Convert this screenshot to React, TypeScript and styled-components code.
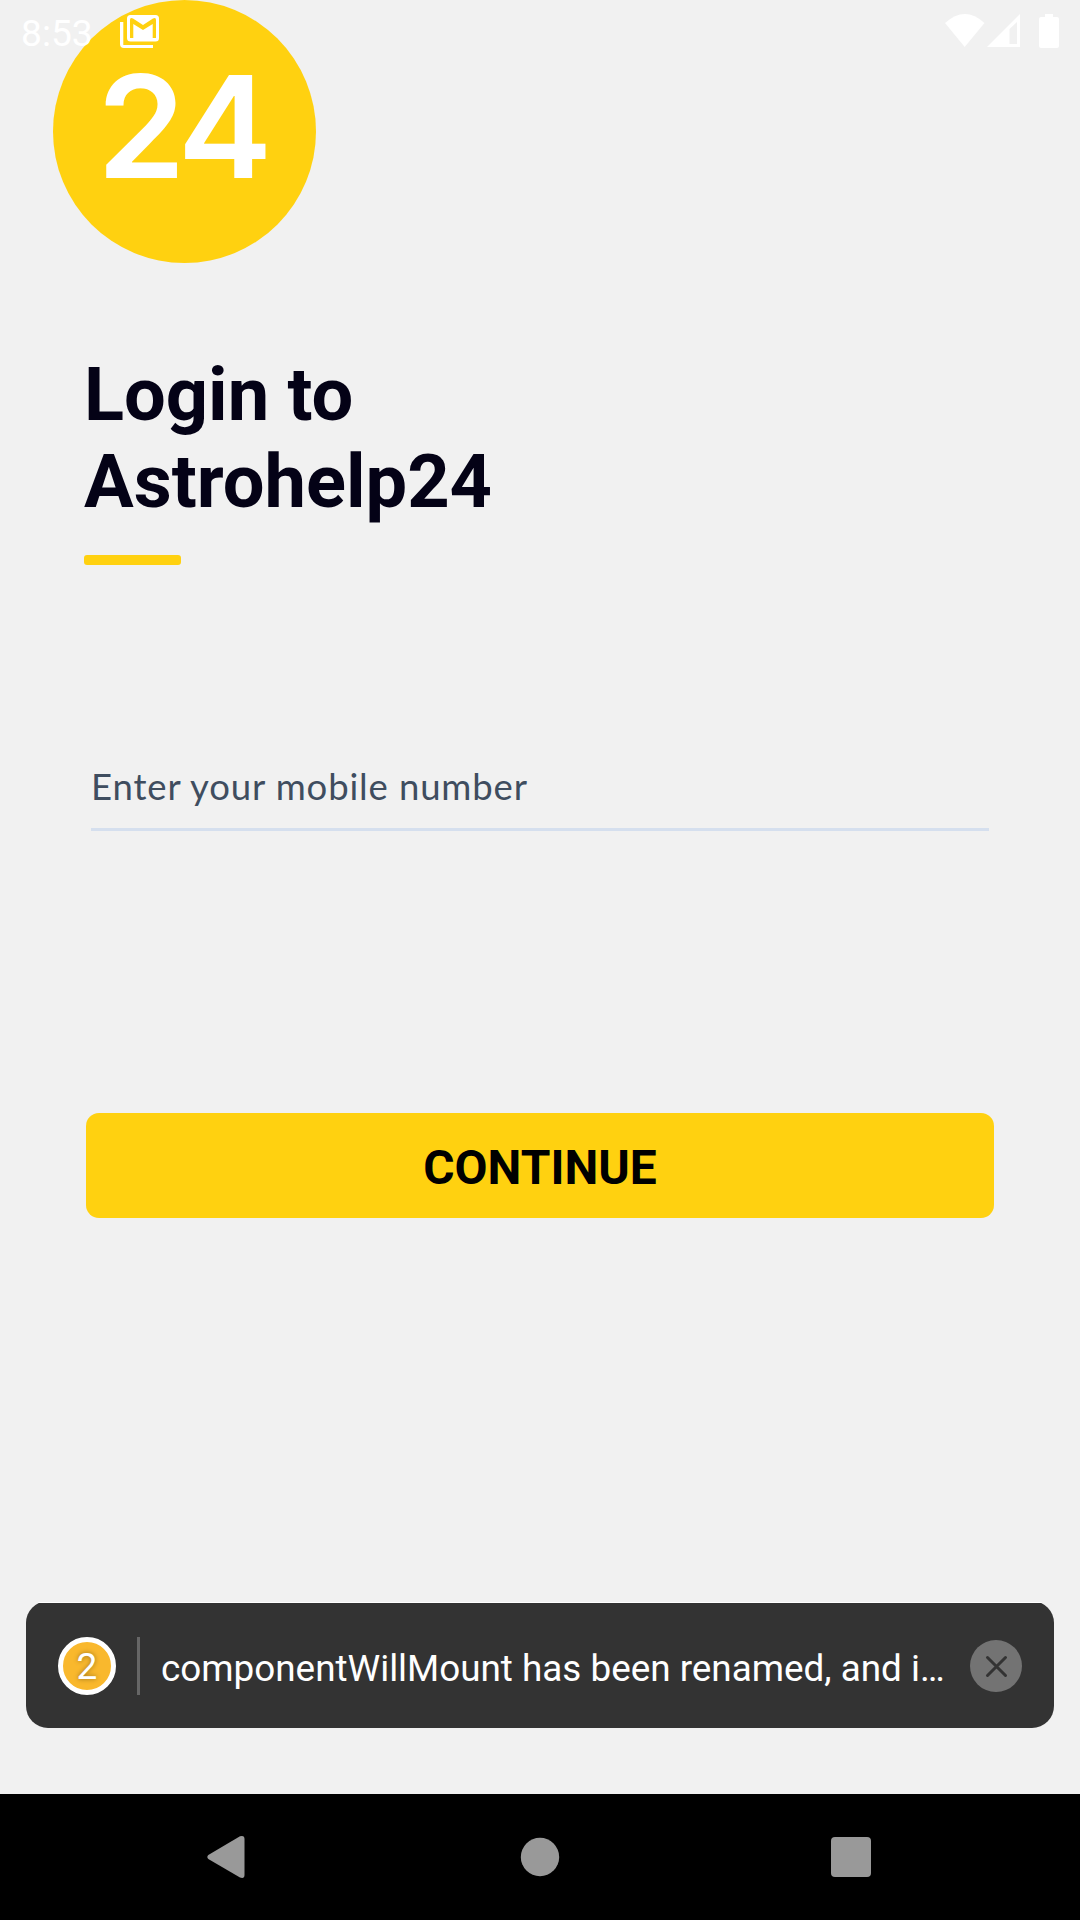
import React from "react";
import styled, { createGlobalStyle } from "styled-components";

const GlobalStyle = createGlobalStyle`
  * { box-sizing: border-box; }
  body { margin: 0; background: #f1f1f1; }
`;

const Screen = styled.div`
  width: 1080px;
  height: 1920px;
  display: flex;
  flex-direction: column;
  background: #f1f1f1;
  font-family: Roboto, sans-serif;
  position: relative;
  overflow: hidden;
`;

const StatusBar = styled.header`
  position: absolute;
  top: 0;
  left: 0;
  right: 0;
  height: 63px;
  padding: 0 21px 0 21px;
  display: flex;
  align-items: flex-start;
  color: #fff;
`;

const Clock = styled.span`
  width: 99px;
  padding-top: 12px;
  font-size: 37.2px;
  line-height: 43px;
`;

const StatusIcon = styled.svg<{ $gap?: number }>`
  display: block;
  margin-left: ${(p) => p.$gap ?? 0}px;
  margin-top: 13px;
  fill: #fff;
`;

const Spacer = styled.div`
  flex: 1;
`;

const Content = styled.main`
  flex: 1;
  display: flex;
  flex-direction: column;
  align-items: flex-start;
`;

const Logo = styled.div`
  width: 263px;
  height: 263px;
  margin-left: 53px;
  padding-right: 5px;
  border-radius: 50%;
  background: #ffd110;
  color: #fff;
  text-align: center;
  font-family: Inter, sans-serif;
  font-size: 142px;
  font-weight: 600;
  letter-spacing: -5.5px;
  line-height: 253px;
`;

const Title = styled.h1`
  margin: 88px 0 0 84px;
  font-size: 74px;
  font-weight: 700;
  line-height: 87px;
  color: #040216;
`;

const Accent = styled.div`
  width: 97px;
  height: 10px;
  margin: 30px 0 0 84px;
  border-radius: 3px;
  background: #ffd110;
`;

const PhoneInput = styled.input`
  width: 898px;
  height: 84px;
  margin: 182px 0 0 91px;
  padding: 0 0 4px;
  border: 0;
  border-bottom: 3px solid #d5dfee;
  border-radius: 0;
  outline: 0;
  background: transparent;
  font-family: Lato, sans-serif;
  font-size: 36.5px;
  letter-spacing: 0.87px;
  color: #3f4d5f;
  &::placeholder {
    color: #3f4d5f;
    opacity: 1;
  }
`;

const ContinueButton = styled.button`
  width: 908px;
  height: 105px;
  margin: 282px 0 0 86px;
  padding: 5px 0 0;
  border: 0;
  border-radius: 13px;
  background: #ffd110;
  color: #000;
  font-family: inherit;
  font-size: 47.9px;
  font-weight: 700;
`;

const ToastEdge = styled.div`
  width: 1004px;
  height: 1px;
  margin-left: 38px;
  background: #fff;
`;

const ToastTray = styled.div`
  height: 125px;
  margin: 0 26px 66px;
  overflow: hidden;
  display: flex;
  align-items: flex-end;
`;

const Toast = styled.aside`
  width: 1028px;
  height: 127px;
  flex: none;
  padding: 2px 32px 0;
  display: flex;
  align-items: center;
  border-radius: 22px;
  background: #333;
  color: #fff;
`;

const Count = styled.span`
  width: 58px;
  height: 58px;
  flex: none;
  border: 5px solid #fff;
  border-radius: 50%;
  background: #f9b82d;
  text-align: center;
  font-size: 37px;
  line-height: 49px;
  text-shadow: 0 0 5px rgba(0, 0, 0, 0.4);
`;

const Divider = styled.span`
  width: 3px;
  height: 58px;
  flex: none;
  margin: 0 21px;
  background: #666;
`;

const Message = styled.span`
  flex: 1;
  padding-top: 6px;
  font-size: 36.85px;
  line-height: 44px;
  white-space: nowrap;
`;

const Dismiss = styled.button`
  width: 52px;
  height: 52px;
  flex: none;
  padding: 0;
  border: 0;
  border-radius: 50%;
  background: #737373;
  display: flex;
  align-items: center;
  justify-content: center;
`;

const NavBar = styled.nav`
  height: 126px;
  flex: none;
  background: #000;
  display: grid;
  grid-template-columns: repeat(3, 311px);
  justify-content: center;
  align-items: center;
  justify-items: center;
`;

const NavIcon = styled.svg`
  fill: #999;
`;

export default function App() {
  return (
    <>
      <GlobalStyle />
      <Screen>
        <Content>
          <Logo>24</Logo>
          <Title>
            Login to
            <br />
            Astrohelp24
          </Title>
          <Accent />
          <PhoneInput type="tel" placeholder="Enter your mobile number" />
          <ContinueButton>CONTINUE</ContinueButton>
        </Content>
        <ToastEdge />
        <ToastTray>
          <Toast>
            <Count>2</Count>
            <Divider />
            <Message>componentWillMount has been renamed, and i…</Message>
            <Dismiss aria-label="Dismiss">
              <svg width="24" height="24" viewBox="0 0 24 24" stroke="#333" strokeWidth="3" strokeLinecap="round">
                <path d="M3.500 3.500L21.500 21.500M21.500 3.500L3.500 21.500" />
              </svg>
            </Dismiss>
          </Toast>
        </ToastTray>
        <NavBar>
          <NavIcon width="45" height="44" viewBox="0 0 45 44">
            <path d="M1.3 20L33 1.3Q37.5 0 37.5 4V40Q37.5 44 33 42.5L1.3 24Q-0.7 22 1.3 20Z" />
          </NavIcon>
          <NavIcon width="40" height="40" viewBox="0 0 40 40">
            <circle cx="20" cy="20" r="19.2" />
          </NavIcon>
          <NavIcon width="40" height="40" viewBox="0 0 40 40">
            <rect x="0" y="0" width="40" height="40" rx="4" />
          </NavIcon>
        </NavBar>
        <StatusBar>
          <Clock>8:53</Clock>
          <StatusIcon width="40" height="36" viewBox="0 0 40 36">
            <path d="M0 9H3.300V32H33V35H4Q0 35 0 31Z" />
            <path
              fillRule="evenodd"
              d="M10.500 2H35.500Q39 2 39 5.500V25Q39 28.500 35.500 28.500H10.500Q7 28.500 7 25V5.500Q7 2 10.500 2ZM10 7V25H13.300V11L23 17L32.700 11V25H36V7Q36 4 33 5.500L23 12L13 5.500Q10 4 10 7Z"
            />
          </StatusIcon>
          <Spacer />
          <StatusIcon width="40" height="36" viewBox="0 0 40 36">
            <path d="M0 10Q20 -8 39.500 10L19.700 34Z" />
          </StatusIcon>
          <StatusIcon $gap={2} width="34" height="36" viewBox="0 0 34 36">
            <path fillRule="evenodd" d="M0 34L33 1V34ZM22.500 16V31H30V9Z" />
          </StatusIcon>
          <StatusIcon $gap={18} width="20" height="36" viewBox="0 0 20 36">
            <path d="M6 1H14V4H18Q20 4 20 6V33Q20 35 18 35H2Q0 35 0 33V6Q0 4 2 4H6Z" />
          </StatusIcon>
        </StatusBar>
      </Screen>
    </>
  );
}
